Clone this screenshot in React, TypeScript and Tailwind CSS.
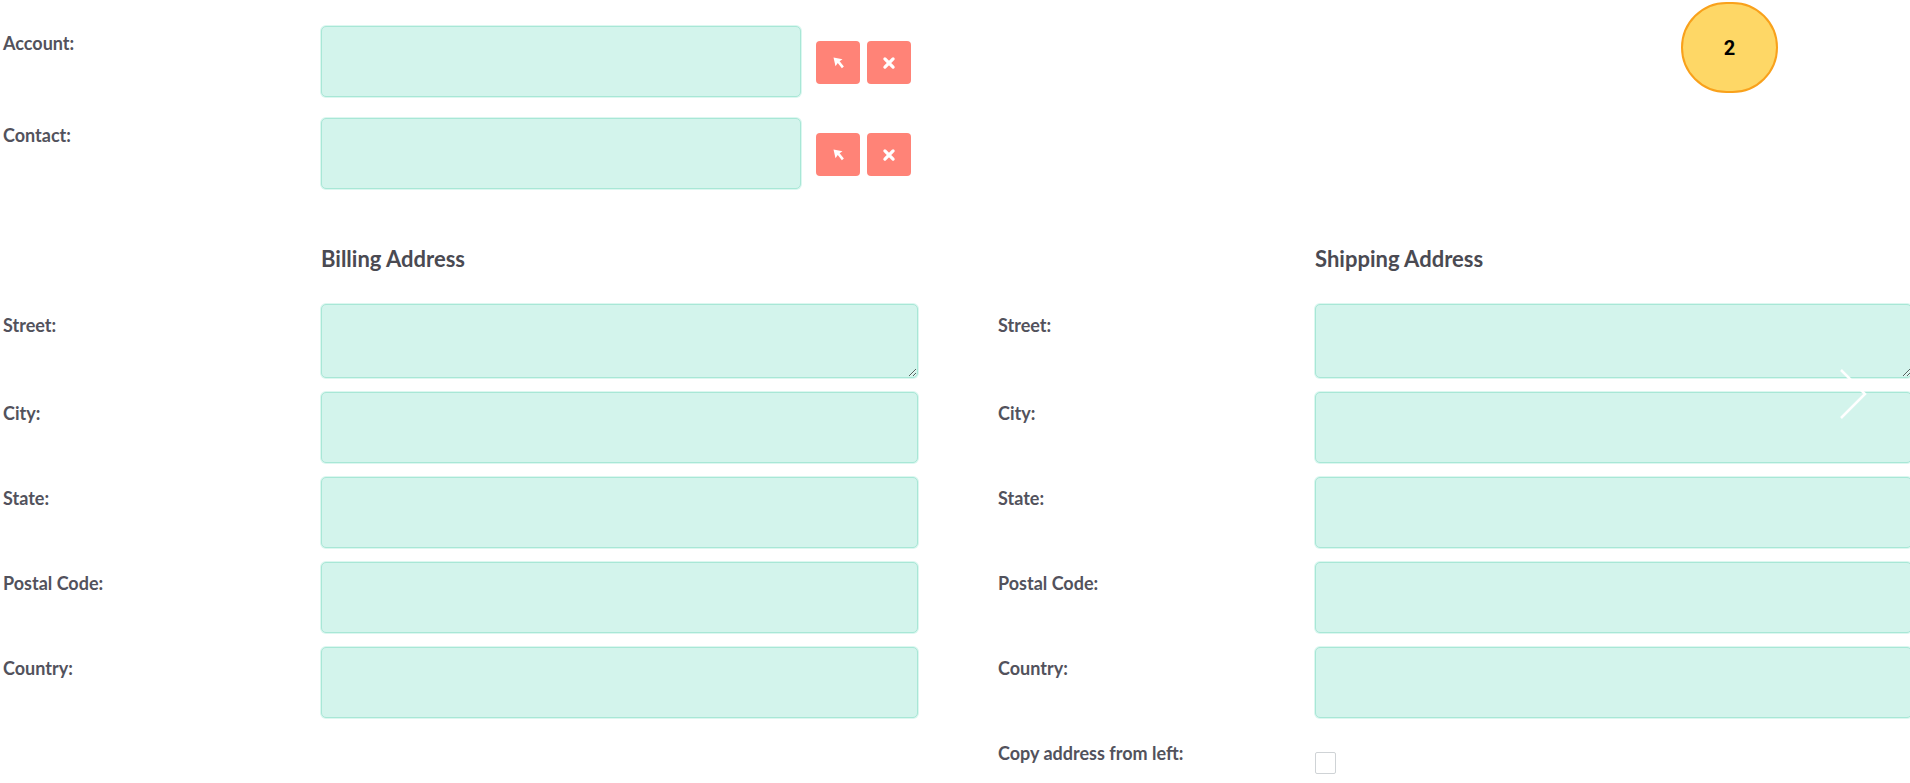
import React from "react";

const inputCls =
  "block rounded-[5px] bg-[#d3f4ec] border border-[#a8e7d6] shadow-[0_0_0_1px_#dcf7f0] outline-none";

const labelCls = "text-[18px] leading-[22px] font-bold text-[#52525c]";

const ArrowIcon = () => (
  <svg width="15" height="15" viewBox="0 0 12 12" fill="white">
    <path d="M2 2 L9.2 3.3 L6.9 5 L10.3 9.2 L8.7 10.6 L5.4 6.4 L3.6 9 Z" />
  </svg>
);

const XIcon = () => (
  <svg width="14" height="14" viewBox="0 0 12 12" stroke="white" strokeWidth="2.8" strokeLinecap="round">
    <path d="M2.5 2.5 L9.5 9.5 M9.5 2.5 L2.5 9.5" />
  </svg>
);

const RelateRow = ({ label }: { label: string }) => (
  <div className="flex items-start">
    <div className={`${labelCls} w-[318px] pt-[6px]`}>{label}</div>
    <input className={`${inputCls} w-[480px] h-[71px]`} />
    <div className="flex gap-[7px] ml-[15px] mt-[15px]">
      <button className="w-[44px] h-[43px] rounded-[4px] bg-[#ff8377] flex items-center justify-center">
        <ArrowIcon />
      </button>
      <button className="w-[44px] h-[43px] rounded-[4px] bg-[#ff8377] flex items-center justify-center">
        <XIcon />
      </button>
    </div>
  </div>
);

const AddrRow = ({ label, area, lw }: { label: string; area?: boolean; lw: string }) => (
  <div className="flex items-start">
    <div className={`${labelCls} ${lw} pt-[10px]`}>{label}</div>
    {area ? (
      <textarea className={`${inputCls} w-[597px] h-[74px]`} />
    ) : (
      <input className={`${inputCls} w-[597px] h-[71px]`} />
    )}
  </div>
);

const fields = ["City:", "State:", "Postal Code:", "Country:"];

export default function App() {
  return (
    <div
      className="relative w-[1910px] h-[783px] overflow-hidden bg-white"
      style={{ fontFamily: "Lato, 'Noto Sans', sans-serif" }}
    >
      {/* account / contact */}
      <div className="flex flex-col gap-[21px] pt-[26px] pl-[3px]">
        <RelateRow label="Account:" />
        <RelateRow label="Contact:" />
      </div>

      {/* addresses */}
      <div className="flex mt-[57px]">
        <div className="w-[998px] shrink-0 pl-[3px]">
          <div className="pl-[318px] text-[22px] leading-[26px] font-bold text-[#4a4a52]">
            Billing Address
          </div>
          <div className="flex flex-col gap-[14px] mt-[32px]">
            <AddrRow label="Street:" area lw="w-[318px]" />
            {fields.map((f) => (
              <AddrRow key={f} label={f} lw="w-[318px]" />
            ))}
          </div>
        </div>

        <div className="shrink-0">
          <div className="pl-[317px] text-[22px] leading-[26px] font-bold text-[#4a4a52]">
            Shipping Address
          </div>
          <div className="flex flex-col gap-[14px] mt-[32px]">
            <AddrRow label="Street:" area lw="w-[317px]" />
            {fields.map((f) => (
              <AddrRow key={f} label={f} lw="w-[317px]" />
            ))}
            <div className="flex items-start mt-[3px]">
              <div className={`${labelCls} w-[317px] pt-[7px]`}>Copy address from left:</div>
              <input
                type="checkbox"
                className="appearance-none w-[21px] h-[22px] mt-[17px] border border-[#cfd3d6] rounded-[2px] bg-white"
              />
            </div>
          </div>
        </div>
      </div>

      {/* step badge */}
      <div className="absolute left-[1681px] top-[2px] w-[97px] h-[91px] rounded-full bg-[#fed766] border-2 border-[#f9a11b] flex items-center justify-center">
        <span className="text-[20px] font-bold text-black" style={{ fontFamily: "Roboto, Arial, sans-serif" }}>
          2
        </span>
      </div>

      {/* carousel arrow */}
      <svg
        className="absolute left-[1838px] top-[368px]"
        width="30"
        height="52"
        viewBox="0 0 30 52"
        fill="none"
        stroke="white"
        strokeWidth="2.5"
      >
        <path d="M3 2 L27 26 L3 50" />
      </svg>
    </div>
  );
}
